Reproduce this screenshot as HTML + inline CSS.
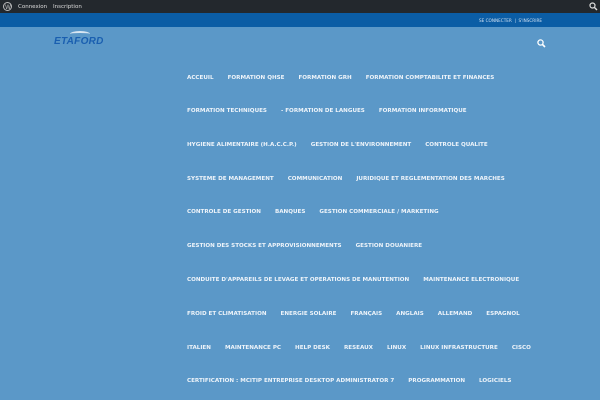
<html><head><style>
body{margin:0;width:600px;height:400px;overflow:hidden;background:#5b98c8;font-family:"DejaVu Sans","Liberation Sans",sans-serif}
.ab{height:13px;background:#23282d;color:#ddd;font-size:5.5px;position:relative}
.ab span{position:absolute;top:4px}
.tb{height:14px;background:#0b5da5;color:#cfe0f2;font-size:4.2px;position:relative}
.row{position:absolute;left:187px;display:flex;gap:14px;color:#eef4fa;font-weight:bold;font-size:5.6px;white-space:nowrap;letter-spacing:0}
</style></head><body>
<div class="ab"><svg style="position:absolute;left:3px;top:2px" width="9" height="9"><circle cx="4.5" cy="4.5" r="4" fill="none" stroke="#bbb" stroke-width="1"/><text x="2" y="7" font-size="6" fill="#bbb">W</text></svg>
<span style="left:18px">Connexion</span><span style="left:53px">Inscription</span>
<svg style="position:absolute;left:589px;top:2px" width="9" height="9"><circle cx="3.5" cy="3.5" r="2.5" fill="none" stroke="#ddd" stroke-width="1.2"/><line x1="5.5" y1="5.5" x2="8" y2="8" stroke="#ddd" stroke-width="1.4"/></svg></div>
<div class="tb"><span style="position:absolute;left:479px;top:5px">SE CONNECTER &nbsp;|&nbsp; S'INSCRIRE</span></div>
<div style="position:absolute;left:54px;top:36px;color:#1a5fb0;font:italic bold 10px 'Liberation Sans',sans-serif;letter-spacing:0.3px">ETAFORD</div>
<div style="position:absolute;left:70px;top:31px;width:20px;height:4px;border-top:2px solid #d8e6f2;border-radius:50%"></div>
<svg style="position:absolute;left:537px;top:39px" width="9" height="9"><circle cx="3.5" cy="3.5" r="2.6" fill="none" stroke="#fff" stroke-width="1.3"/><line x1="5.5" y1="5.5" x2="8" y2="8" stroke="#fff" stroke-width="1.6"/></svg>
<div class="row" style="top:75px"><span>ACCEUIL</span><span>FORMATION QHSE</span><span>FORMATION GRH</span><span>FORMATION COMPTABILITE ET FINANCES</span></div>
<div class="row" style="top:108px"><span>FORMATION TECHNIQUES</span><span>- FORMATION DE LANGUES</span><span>FORMATION INFORMATIQUE</span></div>
<div class="row" style="top:142px"><span>HYGIENE ALIMENTAIRE (H.A.C.C.P.)</span><span>GESTION DE L'ENVIRONNEMENT</span><span>CONTROLE QUALITE</span></div>
<div class="row" style="top:176px"><span>SYSTEME DE MANAGEMENT</span><span>COMMUNICATION</span><span>JURIDIQUE ET REGLEMENTATION DES MARCHES</span></div>
<div class="row" style="top:209px"><span>CONTROLE DE GESTION</span><span>BANQUES</span><span>GESTION COMMERCIALE / MARKETING</span></div>
<div class="row" style="top:243px"><span>GESTION DES STOCKS ET APPROVISIONNEMENTS</span><span>GESTION DOUANIERE</span></div>
<div class="row" style="top:277px"><span>CONDUITE D'APPAREILS DE LEVAGE ET OPERATIONS DE MANUTENTION</span><span>MAINTENANCE ELECTRONIQUE</span></div>
<div class="row" style="top:311px"><span>FROID ET CLIMATISATION</span><span>ENERGIE SOLAIRE</span><span>FRANÇAIS</span><span>ANGLAIS</span><span>ALLEMAND</span><span>ESPAGNOL</span></div>
<div class="row" style="top:345px"><span>ITALIEN</span><span>MAINTENANCE PC</span><span>HELP DESK</span><span>RESEAUX</span><span>LINUX</span><span>LINUX INFRASTRUCTURE</span><span>CISCO</span></div>
<div class="row" style="top:378px"><span>CERTIFICATION : MCITIP ENTREPRISE DESKTOP ADMINISTRATOR 7</span><span>PROGRAMMATION</span><span>LOGICIELS</span></div>
</body></html>
